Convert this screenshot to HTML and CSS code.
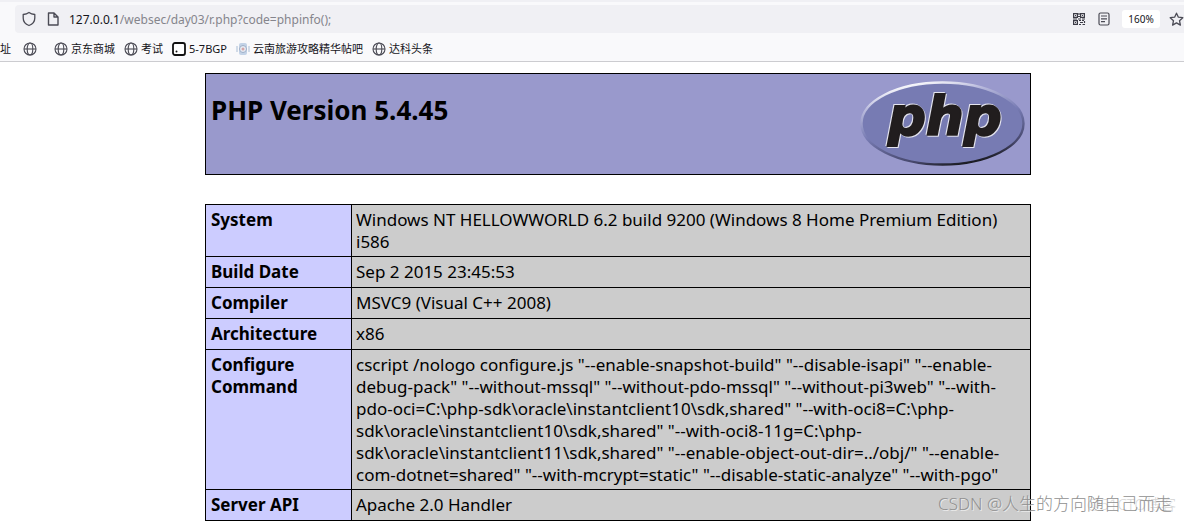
FILE: index.html
```html
<!DOCTYPE html>
<html lang="zh-CN">
<head>
<meta charset="utf-8">
<title>phpinfo()</title>
<link rel="stylesheet" href="styles.css">
</head>
<body>
<svg class="defs" aria-hidden="true">
  <symbol id="globe" viewBox="0 0 14 14"><g fill="none" stroke="#4b4b55" stroke-width="1.1"><circle cx="7" cy="7" r="6"/><ellipse cx="7" cy="7" rx="2.8" ry="6"/><path d="M1 7h12"/></g></symbol>
</svg>
<header class="browser">
  <div class="tabs-edge"></div>
  <div class="address">
    <svg class="icon shield" viewBox="0 0 14 16"><path d="M7 1.5C5 2.9 3 3.3 1.2 3.5V7c0 3.800 2.500 6.300 5.800 7.500 3.300-1.200 5.800-3.700 5.800-7.500V3.500C11 3.300 9 2.900 7 1.500z" fill="none" stroke="#4b4b55" stroke-width="1.300" stroke-linejoin="round"/></svg>
    <svg class="icon page" viewBox="0 0 12 14"><path d="M1.500 1h5.500l4 4v8H1.500zM7 1v4h4" fill="none" stroke="#4b4b55" stroke-width="1.400" stroke-linejoin="round"/></svg>
    <label class="host" for="url">127.0.0.1</label>
    <input class="url" id="url" type="text" value="/websec/day03/r.php?code=phpinfo();">
    <button class="tool" aria-label="QR"><svg width="14" height="14" viewBox="0 0 14 14"><g fill="none" stroke="#3c3c46" stroke-width="1.200"><path d="M1.600 1.600h3.800v3.800H1.600zM8.600 1.600h3.800v3.800H8.600zM1.600 8.600h3.800v3.800H1.600z"/><path d="M7 1v2M6 4.500h2M1 7h4M6 7h3M10 7h3M7 8.500h2M10 8.500h2M8 10.500h3M7 12.500h2M10.500 12.500h2.500M12.500 9v2" /></g><path d="M3 3h1v1H3zM10 3h1v1h-1zM3 10h1v1H3z" fill="#3c3c46"/></svg></button>
    <button class="tool" aria-label="Reader"><svg width="12" height="14" viewBox="0 0 12 14"><rect x="1" y="1" width="10" height="12" rx="1.500" fill="none" stroke="#4b4b55" stroke-width="1.200"/><path d="M3 4h6M3 6.800h6M3 9.600h4" stroke="#4b4b55" stroke-width="1.200"/></svg></button>
    <button class="zoom">160%</button>
    <button class="tool star" aria-label="Bookmark"><svg width="15" height="15" viewBox="0 0 15 15"><path d="M7.500 1.200l1.900 4 4.400.500-3.300 3 .900 4.400-3.900-2.200-3.900 2.200.900-4.400-3.300-3 4.400-.500z" fill="none" stroke="#4b4b55" stroke-width="1.300" stroke-linejoin="round"/></svg></button>
  </div>
  <nav class="bookmarks">
    <a href="#">址</a>
    <a href="#" aria-label="Bookmark"><svg class="fav"><use href="#globe"/></svg></a>
    <a href="#" class="spaced"><svg class="fav"><use href="#globe"/></svg>京东商城</a>
    <a href="#"><svg class="fav"><use href="#globe"/></svg>考试</a>
    <a href="#"><svg class="fav" viewBox="0 0 14 14"><rect x="1" y="1" width="12" height="12" rx="2" fill="#fff" stroke="#111" stroke-width="1.800"/><circle cx="4.500" cy="9.500" r="1" fill="#111"/></svg>5-7BGP</a>
    <a href="#"><svg class="fav" viewBox="0 0 14 14"><path d="M1 4v6M13 4v6" stroke="#c3d1e2" stroke-width="1.500"/><rect x="3" y="1" width="8" height="12" rx="2" fill="#c3d3e7"/><circle cx="7" cy="7" r="3.500" fill="#e8edf4" stroke="#9daec8"/><circle cx="7" cy="7" r="1.500" fill="#d5a5a8"/></svg>云南旅游攻略精华帖吧</a>
    <a href="#"><svg class="fav"><use href="#globe"/></svg>达科头条</a>
  </nav>
</header>
<main class="content">
  <section class="banner">
    <h1>PHP Version 5.4.45</h1>
    <svg class="logo" viewBox="0 0 165 85" role="img" aria-label="php">
      <defs>
        <linearGradient id="rim" x1="0.300" y1="0" x2="0.700" y2="1">
          <stop offset="0" stop-color="#fff"/><stop offset="0.200" stop-color="#b8b9dc"/><stop offset="0.500" stop-color="#777bb3"/><stop offset="0.850" stop-color="#45466a"/><stop offset="1" stop-color="#111"/>
        </linearGradient>
      </defs>
      <ellipse cx="82.500" cy="42.500" rx="81" ry="41" fill="#777bb3" stroke="url(#rim)" stroke-width="2.400"/>
      <text class="logo-text" x="28" y="54">php</text>
    </svg>
  </section>
  <table class="info">
    <tbody>
      <tr class="long"><th scope="row">System</th><td>Windows NT HELLOWWORLD 6.2 build 9200 (Windows 8 Home Premium Edition)<br>i586</td></tr>
      <tr><th scope="row">Build Date</th><td>Sep 2 2015 23:45:53</td></tr>
      <tr><th scope="row">Compiler</th><td>MSVC9 (Visual C++ 2008)</td></tr>
      <tr><th scope="row">Architecture</th><td>x86</td></tr>
      <tr class="long"><th scope="row">Configure<br>Command</th><td>cscript /nologo configure.js "--enable-snapshot-build" "--disable-isapi" "--enable-<br>debug-pack" "--without-mssql" "--without-pdo-mssql" "--without-pi3web" "--with-<br>pdo-oci=C:\php-sdk\oracle\instantclient10\sdk,shared" "--with-oci8=C:\php-<br>sdk\oracle\instantclient10\sdk,shared" "--with-oci8-11g=C:\php-<br>sdk\oracle\instantclient11\sdk,shared" "--enable-object-out-dir=../obj/" "--enable-<br>com-dotnet=shared" "--with-mcrypt=static" "--disable-static-analyze" "--with-pgo"</td></tr>
      <tr><th scope="row">Server API</th><td>Apache 2.0 Handler</td></tr>
    </tbody>
  </table>
</main>
<div class="watermark faint">@51CTO博客</div>
<div class="watermark">CSDN @人生的方向随自己而走</div>
</body>
</html>
```
FILE: styles.css
```css
* { box-sizing: border-box; }
body {
  margin: 0;
  overflow: hidden;
  background: #fff;
  color: #000;
  font-family: "Noto Sans", "Noto Sans CJK SC", sans-serif;
}
button { border: 0; padding: 0; background: none; font: inherit; }
.defs { position: absolute; width: 0; height: 0; }

.browser { background: #f9f9fb; border-bottom: 1px solid #ccccd0; }
.tabs-edge { height: 2px; margin-bottom: 3px; background: #f0f0f4; }
.address {
  display: flex;
  align-items: center;
  height: 28px;
  margin-left: 15px;
  padding-left: 7px;
  border-radius: 4px 0 0 4px;
  background: #f0f0f4;
  font-size: 12px;
}
.icon { flex: none; }
.shield { width: 14px; height: 16px; margin-right: 11px; }
.page { width: 12px; height: 14px; margin-right: 10px; }
.host { color: #15141a; }
.url {
  flex: 1;
  min-width: 0;
  padding: 0;
  border: 0;
  outline: 0;
  background: none;
  color: #85858c;
  font: inherit;
}
.tool { display: flex; flex: none; margin-right: 12px; }
.zoom {
  flex: none;
  width: 38px;
  height: 18px;
  border-radius: 3px;
  background: #fff;
  color: #15141a;
  font-size: 10px;
}
.star { margin: 0 0 0 9px; width: 15px; }
.bookmarks {
  display: flex;
  align-items: center;
  gap: 9px;
  height: 28px;
  padding-top: 3px;
}
.bookmarks a {
  display: flex;
  align-items: center;
  gap: 3px;
  color: #15141a;
  font-size: 11px;
  line-height: 16px;
  text-decoration: none;
  white-space: nowrap;
}
.bookmarks a:first-child { margin-right: 3px; }
.bookmarks .spaced { margin-left: 8px; }
.fav { flex: none; width: 14px; height: 14px; }

.content { padding: 11px 153px 0 205px; }
.banner {
  display: flex;
  justify-content: space-between;
  align-items: flex-start;
  min-height: 102px;
  padding: 7px 5px;
  border: 1px solid #000;
  background: #9999cc;
}
.banner h1 { margin: 12px 0 0; font-size: 26px; line-height: 34px; }
.logo { flex: none; width: 165px; height: 85px; }
.logo-text {
  fill: #211d1e;
  stroke: #211d1e;
  stroke-width: 2px;
  font: italic bold 53px "DejaVu Sans", sans-serif;
  filter: drop-shadow(1px 1px 0 #e4e4ee) drop-shadow(-1px -1px 0 #e4e4ee);
}
.info {
  width: 100%;
  margin-top: 29px;
  border-collapse: collapse;
  table-layout: fixed;
  font-size: 17px;
  line-height: 22px;
}
.info th, .info td {
  padding: 4px;
  border: 1px solid #000;
  text-align: left;
  vertical-align: top;
  white-space: nowrap;
}
.info .long th, .info .long td { padding-top: 4px; padding-bottom: 3px; }
.info tr th { width: 146px; padding-left: 5px; background: #ccccff; }
.info td { background: #cccccc; }

.watermark {
  position: absolute;
  right: 12px;
  bottom: 5px;
  color: #909090;
  font-size: 17px;
  font-weight: 300;
  line-height: 24px;
  text-shadow: 1px 1px 0 #ffffff99;
}
.faint { right: 8px; color: #d4d4d4; font-size: 15px; }
```
